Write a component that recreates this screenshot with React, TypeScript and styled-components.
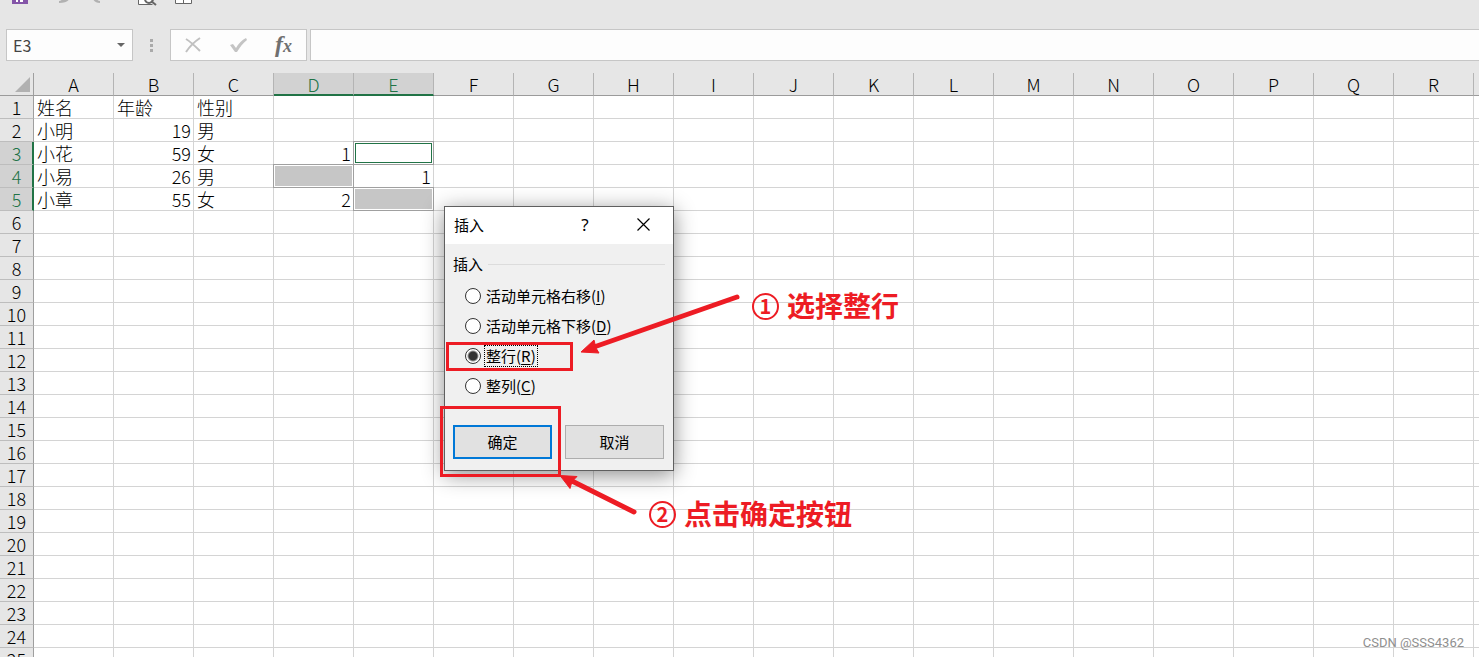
import React from 'react';
import styled, { createGlobalStyle, css } from 'styled-components';

const RED = '#ed1c24';
const GREEN = '#217346';

const GlobalStyle = createGlobalStyle`
  *, *::before, *::after { box-sizing: border-box; }
  body {
    margin: 0;
    background: #e6e6e6;
    color: #000;
    font-family: "Noto Sans CJK SC", sans-serif;
  }
`;

const Workbook = styled.main`
  position: relative;
  display: flex;
  flex-direction: column;
  height: 100vh;
  overflow: hidden;
`;

const QuickAccess = styled.nav`
  display: flex;
  align-items: flex-end;
  height: 6px;
  flex: none;
  overflow: hidden;
  padding-left: 12px;
`;

const QuickButton = styled.button<{ $gap: number }>`
  flex: none;
  display: block;
  padding: 0;
  border: 0;
  margin-right: ${(p) => p.$gap}px;
  background: none;
  line-height: 0;
`;

const FormulaBar = styled.section`
  display: flex;
  flex: none;
  height: 32px;
  margin: 23px 0 12px 6px;
`;

const NameBox = styled.div`
  display: flex;
  align-items: center;
  width: 127px;
  padding: 0 7px 0 6px;
  border: 1px solid #c6c6c6;
  background: #fdfdfd;
`;

const NameInput = styled.input`
  flex: 1;
  min-width: 0;
  padding: 0;
  border: 0;
  outline: 0;
  background: none;
  color: #444;
  font: 16px "Noto Sans CJK SC", sans-serif;
`;

const PlainButton = styled.button`
  display: flex;
  align-items: center;
  justify-content: center;
  padding: 0;
  border: 0;
  background: none;
`;

const FunctionButton = styled(PlainButton)`
  align-items: baseline;
  color: #707070;
  font: italic 700 24px/28px "Liberation Serif", serif;
`;

const SmallX = styled.span`
  font-size: 18px;
`;

const Grip = styled.div`
  display: flex;
  flex-direction: column;
  justify-content: center;
  align-items: center;
  gap: 2px;
  width: 37px;
`;

const Dot = styled.span`
  width: 3px;
  height: 3px;
  background: #aaa;
`;

const FormulaTools = styled.div`
  display: flex;
  justify-content: space-around;
  width: 137px;
  border: 1px solid #c6c6c6;
  background: #fdfdfd;
`;

const FormulaInput = styled.input`
  flex: 1;
  margin-left: 3px;
  padding: 0 6px;
  border: 1px solid #c6c6c6;
  border-right: 0;
  outline: 0;
  background: #fdfdfd;
  font-size: 15px;
`;

const SheetArea = styled.section`
  flex: 1;
  min-height: 0;
  overflow: hidden;
`;

const Grid = styled.table`
  table-layout: fixed;
  width: max-content;
  min-width: 100%;
  border-spacing: 0;
  font-size: 18px;
  font-weight: 300;
  line-height: 22px;
`;

const Col = styled.col<{ $width: number }>`
  width: ${(p) => p.$width}px;
`;

const Corner = styled.td`
  height: 23px;
  padding: 0 3px 3px 0;
  border-right: 1px solid #9f9f9f;
  border-bottom: 1px solid #9b9b9b;
  line-height: 0;
  text-align: right;
  vertical-align: bottom;
`;

const ColumnHead = styled.th<{ $on: boolean }>`
  height: 23px;
  padding: 0;
  border-right: 1px solid #b4b4b4;
  border-bottom: 1px solid #9b9b9b;
  background: #e6e6e6;
  font-weight: 300;
  line-height: 20px;
  vertical-align: top;
  ${(p) =>
    p.$on &&
    css`
      border-bottom: 2px solid ${GREEN};
      background: #d2d2d2;
      color: ${GREEN};
    `}
`;

const ColumnName = styled.span`
  display: block;
  padding-top: 1px;
`;

const RowHead = styled.th<{ $on: boolean }>`
  height: 23px;
  padding: 0;
  border-right: 1px solid #9f9f9f;
  border-bottom: 1px solid #bdbdbd;
  background: #e6e6e6;
  font-weight: 300;
  ${(p) =>
    p.$on &&
    css`
      padding-left: 1px;
      border-right: 2px solid ${GREEN};
      background: #d2d2d2;
      color: ${GREEN};
    `}
`;

const Cell = styled.td<{ $numeric?: boolean }>`
  position: relative;
  height: 23px;
  padding: 0 2px 0 3px;
  border-right: 1px solid #d4d4d4;
  border-bottom: 1px solid #d4d4d4;
  background: #fff;
  text-align: ${(p) => (p.$numeric ? 'right' : 'left')};
  white-space: nowrap;
`;

const Selection = styled.div<{ $active: boolean }>`
  position: absolute;
  inset: -1px;
  z-index: 1;
  padding: 1px;
  border: 1px solid #a0a0a0;
  background: #fff;

  &::before {
    content: '';
    display: block;
    height: 100%;
    border: 1px solid ${(p) => (p.$active ? GREEN : '#c6c6c6')};
    background: ${(p) => (p.$active ? '#fff' : '#c6c6c6')};
  }
`;

const Dialog = styled.form`
  position: absolute;
  z-index: 2;
  top: 206px;
  left: 444px;
  width: 230px;
  border: 1px solid #5f5f5f;
  background: #f0f0f0;
  box-shadow: 0 4px 20px rgba(0, 0, 0, 0.45);
  font-size: 15px;
  line-height: 20px;
`;

const TitleBar = styled.header`
  display: flex;
  align-items: center;
  height: 37px;
  padding: 0 0 2px 9px;
  background: #fff;
`;

const Title = styled.h1`
  flex: 1;
  margin: 0;
  font-size: 15px;
  font-weight: 400;
`;

const TitleButton = styled(PlainButton)<{ $width: number }>`
  width: ${(p) => p.$width}px;
  height: 35px;
  color: #000;
  font: 17px "Noto Sans", sans-serif;
`;

const Options = styled.fieldset`
  display: flex;
  flex-direction: column;
  margin: 0;
  padding: 7px 8px 0;
  border: 0;
`;

const Legend = styled.legend`
  display: flex;
  align-items: center;
  gap: 5px;
  width: 100%;
  padding: 10px 0 0;

  &::after {
    content: '';
    flex: 1;
    height: 1px;
    background: #dcdcdc;
  }
`;

const Option = styled.label`
  display: flex;
  align-items: center;
  gap: 3px;
  height: 30px;
  padding-left: 12px;
`;

const Radio = styled.input`
  appearance: none;
  width: 16px;
  height: 16px;
  margin: 0;
  border: 1px solid #333;
  border-radius: 50%;
  background: #fff;

  &:checked {
    background: radial-gradient(circle, #333 4px, #fff 6px);
  }
`;

const OptionText = styled.span<{ $focused: boolean }>`
  padding: 0 1px;
  border: 1px dotted ${(p) => (p.$focused ? '#000' : 'transparent')};
  white-space: nowrap;
`;

const Key = styled.u`
  text-underline-offset: 2px;
`;

const Actions = styled.footer`
  display: grid;
  grid-template-columns: 1fr 1fr;
  gap: 13px;
  padding: 24px 9px 11px 8px;
`;

const ActionButton = styled.button<{ $primary?: boolean }>`
  height: 34px;
  padding: 0 0 2px;
  border: ${(p) => (p.$primary ? '2px solid #0078d7' : '1px solid #adadad')};
  background: #e1e1e1;
  color: #000;
  font: 15px "Noto Sans CJK SC", sans-serif;
`;

const Highlight = styled.div<{ $x: number; $y: number; $w: number; $h: number }>`
  position: absolute;
  z-index: 3;
  top: ${(p) => p.$y}px;
  left: ${(p) => p.$x}px;
  width: ${(p) => p.$w}px;
  height: ${(p) => p.$h}px;
  border: 3px solid ${RED};
  pointer-events: none;
`;

const Arrows = styled.svg`
  position: absolute;
  z-index: 3;
  top: 280px;
  left: 550px;
  pointer-events: none;
`;

const Note = styled.p<{ $x: number; $y: number }>`
  position: absolute;
  z-index: 3;
  top: ${(p) => p.$y}px;
  left: ${(p) => p.$x}px;
  display: flex;
  align-items: center;
  gap: 8px;
  margin: 0;
  color: ${RED};
  font-size: 28px;
  font-weight: 700;
  line-height: 36px;
  white-space: nowrap;
`;

const StepNumber = styled.span`
  display: flex;
  align-items: center;
  justify-content: center;
  width: 27px;
  height: 27px;
  margin-top: 2px;
  border: 2px solid ${RED};
  border-radius: 50%;
  font-size: 20px;
  line-height: 20px;
`;

const Watermark = styled.small`
  position: absolute;
  z-index: 3;
  right: 15px;
  bottom: 6px;
  color: #8f8f8f;
  font: 13px/16px Roboto, sans-serif;
`;

const columns = 'ABCDEFGHIJKLMNOPQRSTUVWXYZ'.split('');
const rows = Array.from({ length: 48 }, (_, i) => i + 1);
const data: Record<string, string | number> = {
  A1: '姓名', B1: '年龄', C1: '性别',
  A2: '小明', B2: 19, C2: '男',
  A3: '小花', B3: 59, C3: '女', D3: 1,
  A4: '小易', B4: 26, C4: '男', E4: 1,
  A5: '小章', B5: 55, C5: '女', D5: 2,
};
const selected = ['E3', 'D4', 'E5'];
const options = [
  { text: '活动单元格右移', key: 'I' },
  { text: '活动单元格下移', key: 'D' },
  { text: '整行', key: 'R' },
  { text: '整列', key: 'C' },
];

function QuickAccessIcons() {
  return (
    <QuickAccess aria-label="快速访问工具栏">
      <QuickButton $gap={31} aria-label="保存">
        <svg width="16" height="16" viewBox="0 0 16 16">
          <path d="M0 0h16v14H0z" fill="#8455a8" />
          <path d="M4 8h2v4H4zM8 8h3v4H8z" fill="#fff" />
        </svg>
      </QuickButton>
      <QuickButton $gap={18} aria-label="撤消">
        <svg width="16" height="16" viewBox="0 0 16 16" fill="#b1b1b1">
          <path d="M0 3l5-3v2c9 0 9 11-5 11v-2c4 0 6-6 0-6v2z" />
        </svg>
      </QuickButton>
      <QuickButton $gap={29} aria-label="恢复">
        <svg width="16" height="16" viewBox="0 0 16 16" fill="#b1b1b1">
          <path d="M7 3L2 0v2c-5 2-3 11 5 11v-2c-4 0-5-6 0-6v2z" />
        </svg>
      </QuickButton>
      <QuickButton $gap={18} aria-label="打印预览">
        <svg width="19" height="16" viewBox="0 0 19 16" fill="none" stroke="#666">
          <path d="M.5 0v14.500h14" fill="#fff" />
          <circle cx="11" cy="9" r="4" strokeWidth="2" fill="#fff" />
          <path d="M13 11l5 4" strokeWidth="2" />
        </svg>
      </QuickButton>
      <QuickButton $gap={0} aria-label="表格">
        <svg width="17" height="16" viewBox="0 0 17 16" fill="#fff" stroke="#666">
          <path d="M.5 0v13.500h16V0M8.500 0v13.500" />
        </svg>
      </QuickButton>
    </QuickAccess>
  );
}

export default function App() {
  return (
    <Workbook>
      <GlobalStyle />
      <QuickAccessIcons />

      <FormulaBar>
        <NameBox>
          <NameInput aria-label="名称框" defaultValue="E3" />
          <PlainButton aria-label="展开名称框">
            <svg width="8" height="4" viewBox="0 0 8 4"><path d="M0 0h8L4 4z" fill="#666" /></svg>
          </PlainButton>
        </NameBox>
        <Grip><Dot /><Dot /><Dot /></Grip>
        <FormulaTools>
          <PlainButton aria-label="取消输入">
            <svg width="16" height="16" viewBox="0 0 16 16" fill="none" stroke="#c0c0c0" strokeWidth="2">
              <path d="M1 2c5 3 9 7 14 12M15 1C9 5 5 9 1 15" />
            </svg>
          </PlainButton>
          <PlainButton aria-label="输入">
            <svg width="18" height="16" viewBox="0 0 18 16" fill="#c4c4c4">
              <path d="M1 8l3-1 3 4C9 7 13 3 17 1l1 2c-4 3-7 7-10 12H6z" />
            </svg>
          </PlainButton>
          <FunctionButton aria-label="插入函数">f<SmallX>x</SmallX></FunctionButton>
        </FormulaTools>
        <FormulaInput aria-label="编辑栏" />
      </FormulaBar>

      <SheetArea>
        <Grid>
          <colgroup>
            <Col $width={34} />
            {columns.map((c) => <Col key={c} $width={80} />)}
          </colgroup>
          <thead>
            <tr>
              <Corner>
                <svg width="15" height="15" viewBox="0 0 15 15"><path d="M15 0v15H0z" fill="#b1b1b1" /></svg>
              </Corner>
              {columns.map((c) => (
                <ColumnHead key={c} scope="col" $on={c === 'D' || c === 'E'}>
                  <ColumnName>{c}</ColumnName>
                </ColumnHead>
              ))}
            </tr>
          </thead>
          <tbody>
            {rows.map((r) => (
              <tr key={r}>
                <RowHead scope="row" $on={r >= 3 && r <= 5}>{r}</RowHead>
                {columns.map((c) => {
                  const id = `${c}${r}`;
                  return (
                    <Cell key={id} $numeric={typeof data[id] === 'number'}>
                      {data[id]}
                      {selected.includes(id) && <Selection $active={id === 'E3'} />}
                    </Cell>
                  );
                })}
              </tr>
            ))}
          </tbody>
        </Grid>
      </SheetArea>

      <Dialog role="dialog" aria-label="插入" onSubmit={(e) => e.preventDefault()}>
        <TitleBar>
          <Title>插入</Title>
          <TitleButton type="button" $width={56} aria-label="帮助">?</TitleButton>
          <TitleButton type="button" $width={60} aria-label="关闭">
            <svg width="13" height="13" viewBox="0 0 13 13" stroke="#000" strokeWidth="1.200">
              <path d="M.5 .5l12 12M12.500 .5l-12 12" />
            </svg>
          </TitleButton>
        </TitleBar>
        <Options>
          <Legend>插入</Legend>
          {options.map((o) => (
            <Option key={o.key}>
              <Radio type="radio" name="insert" defaultChecked={o.key === 'R'} />
              <OptionText $focused={o.key === 'R'}>{o.text}(<Key>{o.key}</Key>)</OptionText>
            </Option>
          ))}
        </Options>
        <Actions>
          <ActionButton type="submit" $primary>确定</ActionButton>
          <ActionButton type="button">取消</ActionButton>
        </Actions>
      </Dialog>

      <Highlight $x={446} $y={342} $w={127} $h={29} />
      <Highlight $x={440} $y={406} $w={121} $h={71} />
      <Arrows width="200" height="240" viewBox="550 280 200 240" fill={RED} stroke={RED}>
        <path d="M737 297L594 347" strokeWidth="5" strokeLinecap="round" />
        <path d="M581 352l13-12 2 8 3 5z" strokeWidth="1" />
        <path d="M634 512L572 481" strokeWidth="5" strokeLinecap="round" />
        <path d="M560 475.500l17 1-5 5-2 7z" strokeWidth="1" />
      </Arrows>
      <Note $x={752} $y={287}><StepNumber>1</StepNumber>选择整行</Note>
      <Note $x={649} $y={495}><StepNumber>2</StepNumber>点击确定按钮</Note>
      <Watermark>CSDN @SSS4362</Watermark>
    </Workbook>
  );
}
